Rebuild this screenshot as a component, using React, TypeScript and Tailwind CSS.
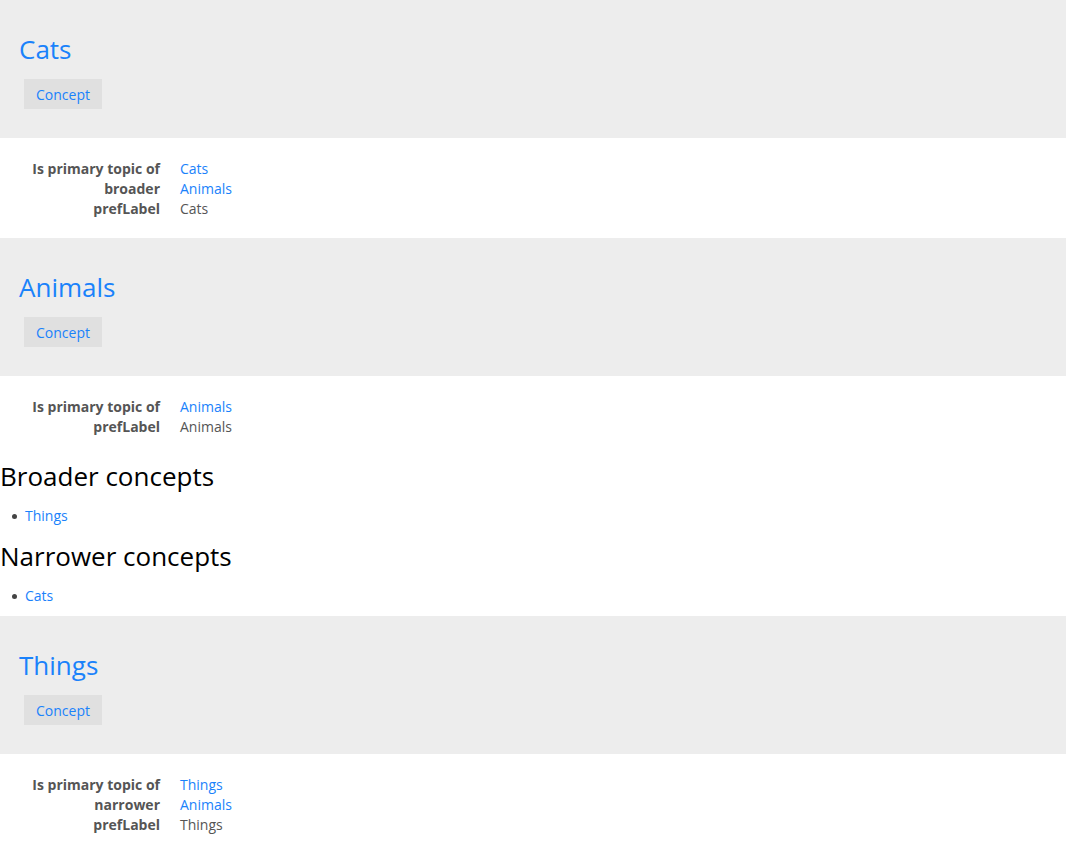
type Row = { label: string; value: string; link?: boolean };

type Concept = {
  title: string;
  rows: Row[];
  broader?: string[];
  narrower?: string[];
};

const concepts: Concept[] = [
  {
    title: "Cats",
    rows: [
      { label: "Is primary topic of", value: "Cats", link: true },
      { label: "broader", value: "Animals", link: true },
      { label: "prefLabel", value: "Cats" },
    ],
  },
  {
    title: "Animals",
    rows: [
      { label: "Is primary topic of", value: "Animals", link: true },
      { label: "prefLabel", value: "Animals" },
    ],
    broader: ["Things"],
    narrower: ["Cats"],
  },
  {
    title: "Things",
    rows: [
      { label: "Is primary topic of", value: "Things", link: true },
      { label: "narrower", value: "Animals", link: true },
      { label: "prefLabel", value: "Things" },
    ],
  },
];

function ConceptList({ heading, items }: { heading: string; items: string[] }) {
  return (
    <section>
      <h2 className="h-10 text-[26px] leading-10 text-black">{heading}</h2>
      <ul className="py-[10px] text-sm leading-5 text-[#555]">
        {items.map((item) => (
          <li key={item} className="flex items-center">
            <span className="ml-[12px] mr-[8px] h-[5px] w-[5px] rounded-full bg-[#444]" />
            <a href="#" className="text-[#1a82fb]">
              {item}
            </a>
          </li>
        ))}
      </ul>
    </section>
  );
}

function ConceptBlock({ concept }: { concept: Concept }) {
  return (
    <article>
      <header className="bg-[#ededed] px-[19px] pt-[30px] pb-[29px]">
        <h1 className="text-[26px] leading-[39px] text-[#1a82fb]">{concept.title}</h1>
        <span className="ml-[5px] mt-[10px] flex h-[30px] w-[78px] justify-center bg-[#e0e0e0] pt-[6px] text-sm leading-5 text-[#1a82fb]">
          Concept
        </span>
      </header>
      <dl className="grid grid-cols-[160px_1fr] gap-x-5 pt-[21px] pb-[19px] text-sm leading-5 text-[#555]">
        {concept.rows.map((row) => (
          <div key={row.label} className="contents">
            <dt className="text-right font-bold">{row.label}</dt>
            <dd>
              {row.link ? (
                <a href="#" className="text-[#1a82fb]">
                  {row.value}
                </a>
              ) : (
                row.value
              )}
            </dd>
          </div>
        ))}
      </dl>
      {concept.broader ? <ConceptList heading="Broader concepts" items={concept.broader} /> : null}
      {concept.narrower ? <ConceptList heading="Narrower concepts" items={concept.narrower} /> : null}
    </article>
  );
}

export default function App() {
  return (
    <main className="min-h-screen bg-white font-['Open_Sans',sans-serif]">
      {concepts.map((concept) => (
        <ConceptBlock key={concept.title} concept={concept} />
      ))}
    </main>
  );
}
